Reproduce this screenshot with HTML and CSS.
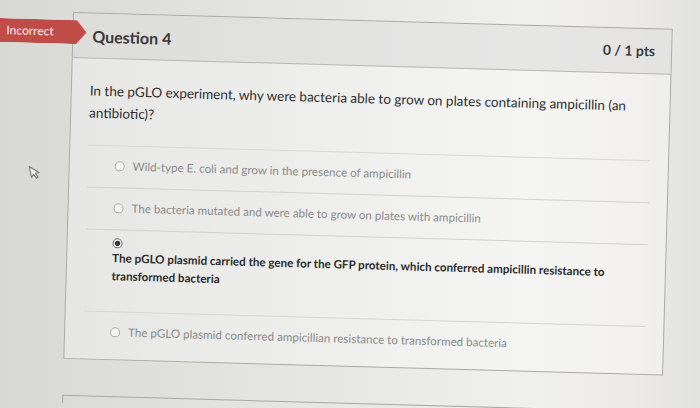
FILE: index.html
```
<!DOCTYPE html>
<html lang="en">
<head>
<meta charset="utf-8">
<title>Question 4</title>
<link rel="stylesheet" href="styles.css">
</head>
<body>
<div class="stage">
  <div class="question">
    <div class="badge">Incorrect</div>
    <div class="header">
      <span class="qname">Question 4</span>
      <span class="pts">0 / 1 pts</span>
    </div>
    <div class="body">
      <p class="qtext">In the pGLO experiment, why were bacteria able to grow on plates containing ampicillin (an antibiotic)?</p>
      <div class="answers">
        <div class="answer"><span class="radio"></span><span class="atext">Wild-type E. coli and grow in the presence of ampicillin</span></div>
        <div class="answer"><span class="radio"></span><span class="atext">The bacteria mutated and were able to grow on plates with ampicillin</span></div>
        <div class="answer selected"><span class="radio on"></span><div class="atext">The pGLO plasmid carried the gene for the GFP protein, which conferred ampicillin resistance to transformed bacteria</div></div>
        <div class="answer"><span class="radio"></span><span class="atext">The pGLO plasmid conferred ampicillian resistance to transformed bacteria</span></div>
      </div>
    </div>
  </div>
  <div class="next"></div>
</div>
<svg class="cursor" width="12" height="16" viewBox="0 0 12 16"><path d="M1.5 1.5 L1.5 12.5 L4.2 10 L6.2 14.5 L8 13.7 L6.1 9.3 L9.8 9.3 Z" fill="#eeeeec" stroke="#7c7c7a" stroke-width="1.1" stroke-linejoin="round"/></svg>
</body>
</html>
```

FILE: styles.css
```
* { box-sizing: border-box; }
html, body { margin: 0; padding: 0; }
body {
  width: 700px;
  height: 408px;
  overflow: hidden;
  position: relative;
  font-family: Lato, "Open Sans", "Liberation Sans", sans-serif;
  background: linear-gradient(90deg, #d8d8d5 0%, #e0e0dd 25%, #e9e9e7 55%, #f0f0ee 75%, #ecebe9 90%, #e2e2e0 100%);
}
.stage {
  padding: 12px 0 0 73px;
  transform: rotate(1.6deg);
  transform-origin: 73px 12px;
}
.question {
  position: relative;
  width: 600px;
  border: 1px solid #a9a9a7;
  background: rgba(255,255,255,0.32);
  padding-bottom: 6px;
}
.badge {
  position: absolute;
  left: -74px;
  top: 7px;
  width: 87px;
  height: 24px;
  background: #c04c48;
  color: #fbeeee;
  font-size: 12px;
  line-height: 24px;
  padding-left: 7px;
  clip-path: polygon(0 0, 77px 0, 87px 50%, 77px 100%, 0 100%);
  z-index: 2;
}
.header {
  height: 45px;
  background: rgba(200,200,198,0.3);
  border-bottom: 1px solid #b8b8b6;
  display: flex;
  align-items: center;
  justify-content: space-between;
  padding: 0 16px 0 19px;
}
.qname {
  font-size: 16px;
  font-weight: 700;
  color: #3a3a3a;
}
.pts {
  font-size: 14px;
  font-weight: 700;
  color: #3c3c3c;
  margin-top: -2px;
}
.body {
  padding: 0 18px;
}
.qtext {
  margin: 21px 0 21px 0;
  font-size: 13.5px;
  line-height: 22px;
  color: #2f2f2f;
  max-width: 548px;
}
.answer {
  border-top: 1px solid #d2d2d0;
  padding: 11px 0 12px 27px;
  display: flex;
  align-items: center;
  gap: 8px;
  font-size: 11.6px;
  line-height: 18px;
  color: #8b8b89;
}
.answer:first-child { border-top-color: #d8d8d6; }
.answer.selected {
  display: block;
  padding: 8px 0 26px 27px;
  color: #2c2c2c;
  font-weight: 700;
}
.answer.selected .atext {
  margin-top: 1px;
  max-width: 505px;
}
.answer:last-child { border-top-color: #d6d6d4; }
.radio {
  display: block;
  flex: none;
  width: 10px;
  height: 10px;
  border-radius: 50%;
  border: 1px solid #aaaaa8;
  background: #f5f5f3;
}
.radio.on {
  border: 1.5px solid #737371;
  background: radial-gradient(circle, #3a3a3a 0 2.4px, #e9e9e7 2.9px);
}
.next {
  margin-top: 36px;
  width: 600px;
  height: 8px;
  border: 1px solid #a9a9a7;
  border-bottom: none;
}
.cursor {
  position: absolute;
  left: 29px;
  top: 164px;
  transform: rotate(-12deg);
}
```
